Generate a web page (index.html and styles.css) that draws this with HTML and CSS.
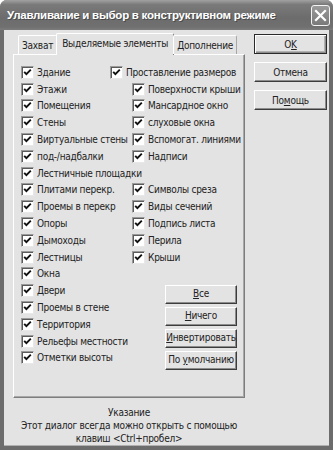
FILE: index.html
```html
<!DOCTYPE html>
<html>
<head>
<meta charset="utf-8">
<link rel="stylesheet" href="styles.css">
</head>
<body>
<div class="window">
  <div class="titlebar">
    <span class="title">Улавливание и выбор в конструктивном режиме</span>
    <span class="close"><svg width="13" height="13" viewBox="0 0 13 13"><path d="M2 2 L11 11 M11 2 L2 11" stroke="#fff" stroke-width="2.2" stroke-linecap="square"/></svg></span>
  </div>
  <div class="client">
    <div class="main">
      <div class="tabs">
        <div class="tab">Захват</div>
        <div class="tab active">Выделяемые элементы</div>
        <div class="tab">Дополнение</div>
      </div>
      <div class="panel">
        <div class="col left">
          <label class="item"><span class="cb"></span>Здание</label>
          <label class="item"><span class="cb"></span>Этажи</label>
          <label class="item"><span class="cb"></span>Помещения</label>
          <label class="item"><span class="cb"></span>Стены</label>
          <label class="item"><span class="cb"></span>Виртуальные стены</label>
          <label class="item"><span class="cb"></span>под-/надбалки</label>
          <label class="item"><span class="cb"></span>Лестничные площадки</label>
          <label class="item"><span class="cb"></span>Плитами перекр.</label>
          <label class="item"><span class="cb"></span>Проемы в перекр</label>
          <label class="item"><span class="cb"></span>Опоры</label>
          <label class="item"><span class="cb"></span>Дымоходы</label>
          <label class="item"><span class="cb"></span>Лестницы</label>
          <label class="item"><span class="cb"></span>Окна</label>
          <label class="item"><span class="cb"></span>Двери</label>
          <label class="item"><span class="cb"></span>Проемы в стене</label>
          <label class="item"><span class="cb"></span>Территория</label>
          <label class="item"><span class="cb"></span>Рельефы местности</label>
          <label class="item"><span class="cb"></span>Отметки высоты</label>
        </div>
        <div class="col right">
          <label class="item shift"><span class="cb"></span>Проставление размеров</label>
          <label class="item"><span class="cb"></span>Поверхности крыши</label>
          <label class="item"><span class="cb"></span>Мансардное окно</label>
          <label class="item"><span class="cb"></span>слуховые окна</label>
          <label class="item"><span class="cb"></span>Вспомогат. линиями</label>
          <label class="item"><span class="cb"></span>Надписи</label>
          <div class="item"></div>
          <label class="item"><span class="cb"></span>Символы среза</label>
          <label class="item"><span class="cb"></span>Виды сечений</label>
          <label class="item"><span class="cb"></span>Подпись листа</label>
          <label class="item"><span class="cb"></span>Перила</label>
          <label class="item"><span class="cb"></span>Крыши</label>
          <div class="actions">
            <button class="btn small"><u>В</u>се</button>
            <button class="btn small"><u>Н</u>ичего</button>
            <button class="btn small"><u>И</u>нвертировать</button>
            <button class="btn small">По <u>у</u>молчанию</button>
          </div>
        </div>
      </div>
      <div class="hint">Указание<br>Этот диалог всегда можно открыть с помощью<br>клавиш &lt;Ctrl+пробел&gt;</div>
    </div>
    <div class="side">
      <button class="btn default">O<u>K</u></button>
      <button class="btn">Отмена</button>
      <button class="btn">По<u>м</u>ощь</button>
    </div>
  </div>
</div>
</body>
</html>
```
FILE: styles.css
```css
* { box-sizing: border-box; }
body { margin: 0; background: #fff; }
.window {
  width: 333px;
  height: 450px;
  background: #6c6c6c;
  border-radius: 7px 7px 0 0;
  display: flex;
  flex-direction: column;
  font-family: "DejaVu Sans Condensed", "Liberation Sans", Arial, sans-serif;
  font-size: 10px;
  letter-spacing: -0.25px;
  color: #222;
  overflow: hidden;
}
.titlebar {
  height: 30px;
  display: flex;
  align-items: center;
  padding: 0 3px 0 7px;
  background: linear-gradient(#a2a2a2, #7a7a7a 15%, #6c6c6c 60%, #707070 90%, #7c7c7c);
}
.title {
  flex: 1;
  color: #fff;
  font-family: "Liberation Sans", Arial, sans-serif;
  font-weight: bold;
  font-size: 11.5px;
  letter-spacing: -0.25px;
  text-shadow: 1px 1px 0 #4a4a4a;
  white-space: nowrap;
}
.close {
  width: 19px;
  height: 21px;
  border: 1px solid #f4f4f4;
  border-radius: 3px;
  background: linear-gradient(#9a9a9a, #7a7a7a);
  display: flex;
  align-items: center;
  justify-content: center;
}
.client {
  flex: 1;
  margin: 0 4px 4px;
  background: #e3e3e3;
  display: flex;
  padding-left: 9px;
  border-bottom: 1px solid #b0b0b0;
}
.main {
  width: 232px;
  padding-top: 3px;
}
.tabs {
  display: flex;
  align-items: flex-end;
  height: 21px;
  padding-left: 5px;
  position: relative;
  z-index: 1;
}
.tab {
  height: 19px;
  padding: 4px 3px 0;
  border: 1px solid #a8a8a8;
  border-top-color: #fff;
  border-left-color: #fff;
  border-bottom: none;
  border-radius: 2px 2px 0 0;
  background: #e3e3e3;
  white-space: nowrap;
}
.tab.active {
  height: 22px;
  margin: 0 -1px -1px -1px;
  padding: 4px 5px 0;
  border-right-color: #7a7a7a;
}
.panel {
  height: 344px;
  border: 1px solid #fff;
  border-right-color: #7e7e7e;
  border-bottom-color: #7e7e7e;
  box-shadow: inset -1px -1px 0 #a8a8a8;
  padding: 9px 0 0 7px;
  display: flex;
}
.col { display: flex; flex-direction: column; }
.col.left { width: 111px; }
.item {
  height: 16.8px;
  display: flex;
  align-items: center;
  gap: 2px;
  white-space: nowrap;
}
.item.shift { margin-left: -22px; }
.cb {
  flex: none;
  width: 13px;
  height: 13px;
  margin-right: 1px;
  background: #fff url("data:image/svg+xml,%3Csvg xmlns='http://www.w3.org/2000/svg' width='11' height='11'%3E%3Cpath d='M2.2 4.8 L4.4 7.2 L8.8 2.6' fill='none' stroke='%23111' stroke-width='1.9'/%3E%3C/svg%3E") no-repeat 0 0;
  border: 1px solid #9a9a9a;
  border-right-color: #e8e8e8;
  border-bottom-color: #e8e8e8;
  box-shadow: inset 1px 1px 0 #5a5a5a;
}
.actions {
  margin: 19px 0 0 33px;
  display: flex;
  flex-direction: column;
  gap: 3px;
}
.btn {
  font-family: inherit;
  font-size: 10px;
  letter-spacing: -0.25px;
  color: #222;
  background: #e3e3e3;
  border: 1px solid #fff;
  border-right-color: #3c3c3c;
  border-bottom-color: #3c3c3c;
  box-shadow: inset -1px -1px 0 #8c8c8c;
  padding: 0;
  height: 20px;
  width: 73px;
  line-height: 17px;
  text-align: center;
  white-space: nowrap;
}
.btn.small { width: 72px; height: 19px; line-height: 16px; }
.btn u { text-decoration: underline; }
.side {
  margin-left: 9px;
  padding-top: 4px;
  display: flex;
  flex-direction: column;
  gap: 8px;
}
.btn.default {
  border: 1px solid #2a2a2a;
  box-shadow: inset 1px 1px 0 #fff, inset -1px -1px 0 #8c8c8c, inset -2px -2px 0 #b0b0b0;
}
.hint {
  text-align: center;
  line-height: 13px;
  padding-top: 8px;
}
```
